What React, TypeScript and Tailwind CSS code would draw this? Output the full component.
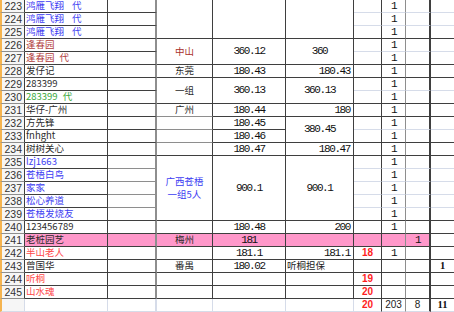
import clsx from 'clsx'
import type { ReactNode } from 'react'

type Line = 'd' | 'l' | 'g'

type CellDef = {
  span?: number
  text?: ReactNode
  cls?: string
  align?: 'l' | 'c' | 'r'
  bb?: Line
  br?: Line
  pink?: boolean
}

const heights: Record<number, string> = {
  1: 'h-[13px]',
  2: 'h-[26px]',
  3: 'h-[39px]',
  5: 'h-[65px]',
}

const bottom: Record<Line, string> = {
  d: 'border-b-[#3f3f3f]',
  l: 'border-b-[#d6dce9]',
  g: 'border-b-[#8e8e8e]',
}

const right: Record<Line, string> = {
  d: 'border-r-[#3f3f3f]',
  l: 'border-r-[#d6dce9]',
  g: 'border-r-[#8e8e8e]',
}

const cjk = "font-['Noto_Sans_CJK_SC',sans-serif] text-[9.5px]"
const mono = "font-['Liberation_Mono',monospace] text-[11px] tracking-[-1.4px] text-[#111]"
const sans = "font-['Liberation_Sans',Arial,sans-serif] text-[10px] text-[#222]"
const redBold = "font-['Liberation_Sans',Arial,sans-serif] text-[10px] font-bold text-[#ff1e1e]"
const serifBold = "font-['Liberation_Serif',serif] text-[10.5px] font-bold text-[#111]"

const ink = 'text-[#2b2b2b]'
const blue = 'text-[#3d3df2]'
const brown = 'text-[#b2403c]'
const green = 'text-[#3aa83a]'
const red = 'text-[#ff4848]'

const names: [string, string, string?][] = [
  ['鸿雁飞翔', blue, '代'],
  ['鸿雁飞翔', blue, '代'],
  ['鸿雁飞翔', blue, '代'],
  ['逢春园', brown],
  ['逢春园', brown, '代'],
  ['发仔记', ink],
  ['283399', ink],
  ['283399', green, '代'],
  ['华仔-广州', ink],
  ['方先锋', ink],
  ['fnhght', ink],
  ['树树关心', ink],
  ['lzj1663', blue],
  ['苍梧白鸟', blue],
  ['家家', blue],
  ['松心养道', blue],
  ['苍梧发烧友', blue],
  ['123456789', ink],
  ['老桩园艺', ink],
  ['半山老人', red],
  ['曾国华', ink],
  ['听桐', red],
  ['山水魂', red],
]

// rows (0 = 223) whose lower edge is a heavy rule across the right-hand columns
const heavy = new Set([2, 4, 5, 7, 8, 10, 11, 16, 17, 18, 19, 20, 21, 22])
const PINK = 18
const SUM = 23

const summary: CellDef = { bb: 'l', br: 'l' }

function Cell({ c, br, extra }: { c: CellDef; br: Line; extra?: string }) {
  return (
    <div
      className={clsx(
        'flex items-center whitespace-nowrap border-b border-r leading-none',
        heights[c.span ?? 1],
        bottom[c.bb ?? 'd'],
        right[c.br ?? br],
        c.align === 'l' && 'justify-start pl-px',
        c.align === 'r' && 'justify-end pr-[3px]',
        (c.align ?? 'c') === 'c' && 'justify-center text-center',
        c.pink ? 'bg-[#ff98ca]' : 'bg-white',
        extra,
        c.cls,
      )}
    >
      {c.text}
    </div>
  )
}

function Col({ w, br, cells, extra }: { w: string; br: Line; cells: CellDef[]; extra?: string }) {
  return (
    <div className={clsx('flex shrink-0 flex-col', w)}>
      {cells.map((c, i) => (
        <Cell key={i} c={c} br={br} extra={extra} />
      ))}
    </div>
  )
}

const rowHeads: CellDef[] = [
  ...names.map((_, i) => ({
    text: 223 + i,
    bb: 'g' as Line,
    align: 'r' as const,
    cls: "font-['Liberation_Sans',Arial,sans-serif] text-[10.5px] text-[#333] !bg-[#f6f6f6] !pr-[2px]",
  })),
  { ...summary, cls: '!bg-[#f6f6f6]' },
]

const nameCells: CellDef[] = [
  ...names.map(([t, color, suffix], i) => ({
    text: (
      <>
        {t}
        {suffix && <span className={t.startsWith('鸿') ? 'ml-[8px]' : 'ml-[5px]'}>{suffix}</span>}
      </>
    ),
    align: 'l' as const,
    cls: clsx(cjk, color),
    pink: i === PINK,
  })),
  summary,
]

const emptyCells: CellDef[] = [
  ...names.map((_, i) => ({ pink: i === PINK, bb: (i >= 12 && i < 16 ? 'g' : 'd') as Line })),
  summary,
]

const regionCls = clsx(cjk, ink)

const regionCells: CellDef[] = [
  { span: 3 },
  { span: 2, text: '中山', cls: clsx(cjk, 'text-[#a8302c]') },
  { text: '东莞', cls: regionCls },
  { span: 2, text: '一组', cls: regionCls },
  { text: '广州', cls: regionCls, bb: 'g' },
  { bb: 'g' },
  { bb: 'g' },
  {},
  {
    span: 5,
    text: (
      <div className="flex flex-col leading-[13px]">
        <span>广西苍梧</span>
        <span>一组5人</span>
      </div>
    ),
    cls: clsx(cjk, blue),
  },
  {},
  { text: '梅州', cls: regionCls, pink: true },
  {},
  { text: '番禺', cls: regionCls },
  {},
  {},
  summary,
]

const amountCells: CellDef[] = [
  { span: 3 },
  { span: 2, text: '360.12', cls: mono },
  { text: '180.43', cls: mono },
  { span: 2, text: '360.13', cls: mono },
  { text: '180.44', cls: mono },
  { text: '180.45', cls: mono },
  { text: '180.46', cls: mono },
  { text: '180.47', cls: mono },
  { span: 5, text: '900.1', cls: mono },
  { text: '180.48', cls: mono },
  { text: '181', cls: mono, pink: true },
  { text: '181.1', cls: mono },
  { text: '180.02', cls: mono },
  {},
  {},
  summary,
]

const paidCells: CellDef[] = [
  { span: 3 },
  { span: 2, text: '360', cls: mono },
  { text: '180.43', cls: mono, align: 'r' },
  { span: 2, text: '360.13', cls: mono },
  { text: '180', cls: mono, align: 'r' },
  { span: 2, text: '380.45', cls: mono },
  { text: '180.47', cls: mono, align: 'r' },
  { span: 5, text: '900.1', cls: mono },
  { text: '200', cls: mono, align: 'r' },
  { pink: true },
  { text: '181.1', cls: mono, align: 'r' },
  { text: '听桐担保', cls: clsx(cjk, 'text-[#222]'), align: 'l' },
  {},
  {},
  summary,
]

function tallyCol(content: (i: number) => Pick<CellDef, 'text' | 'cls'> | undefined, pinkToo = true): CellDef[] {
  return Array.from({ length: 24 }, (_, i) => ({
    ...content(i),
    bb: (i !== SUM && heavy.has(i) ? 'd' : 'l') as Line,
    pink: pinkToo && i === PINK,
  }))
}

const colG = tallyCol((i) => {
  const v: Record<number, string> = { 19: '18', 21: '19', 22: '20', 23: '20' }
  return v[i] ? { text: v[i], cls: redBold } : undefined
})

const colH = tallyCol((i) => {
  if (i === SUM) return { text: '203', cls: sans }
  if (i <= 17 || i === 19) return { text: '1', cls: mono }
  return undefined
})

const colI = tallyCol((i) => {
  if (i === PINK) return { text: '1', cls: mono }
  if (i === SUM) return { text: '8', cls: sans }
  return undefined
})

const colJ = tallyCol((i) => {
  if (i === 20) return { text: '1', cls: serifBold }
  if (i === SUM) return { text: '11', cls: serifBold }
  return undefined
}, false)

export default function App() {
  return (
    <div className="flex h-[312px] w-[454px] overflow-hidden bg-white">
      <Col w="w-[25px]" br="d" cells={rowHeads} extra="border-l-2 border-l-[#f5b450]" />
      <Col w="w-[83px]" br="d" cells={nameCells} />
      <Col w="w-[49px]" br="g" cells={emptyCells} extra="border-r-2" />
      <Col w="w-[56px]" br="d" cells={regionCells} />
      <Col w="w-[73px]" br="d" cells={amountCells} />
      <Col w="w-[68px]" br="d" cells={paidCells} />
      <Col w="w-[28px]" br="d" cells={colG} />
      <Col w="w-[24px]" br="g" cells={colH} />
      <Col w="w-[25px]" br="d" cells={colI} extra="border-r-2" />
      <Col w="w-[23px]" br="l" cells={colJ} extra="!border-r-0" />
    </div>
  )
}
